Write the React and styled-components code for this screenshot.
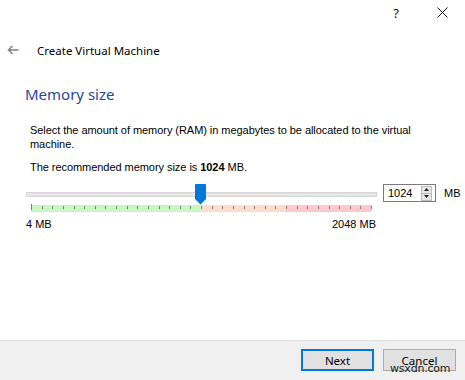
import React from "react";
import styled, { createGlobalStyle } from "styled-components";

const Global = createGlobalStyle`
  html, body { margin: 0; padding: 0; background: #fff; }
  body { font-family: "Liberation Sans", Arial, sans-serif; }
  * { box-sizing: border-box; }
`;

const Window = styled.div`
  width: 465px;
  height: 380px;
  display: flex;
  flex-direction: column;
  background: #fff;
  position: relative;
  overflow: hidden;
`;

const TitleBar = styled.div`
  height: 25px;
  display: flex;
  justify-content: flex-end;
`;

const TitleBtn = styled.div`
  width: 46px;
  height: 25px;
  display: flex;
  align-items: center;
  justify-content: center;
  font-family: "Noto Sans", sans-serif;
  font-size: 13px;
  color: #111;
`;

const Header = styled.div`
  height: 26px;
  margin-top: 12px;
  display: flex;
  align-items: center;
  padding-left: 7px;
  gap: 18px;
`;

const HeaderTitle = styled.div`
  font-family: "Noto Sans", sans-serif;
  font-size: 11.5px;
  color: #000;
`;

const Content = styled.div`
  padding: 20px 0 0 25px;
  display: flex;
  flex-direction: column;
`;

const Heading = styled.h1`
  margin: 0;
  font-family: "Noto Sans", sans-serif;
  font-weight: 400;
  font-size: 15px;
  line-height: 22px;
  color: #23479d;
`;

const Body = styled.div`
  padding: 18px 0 0 5px;
  width: 440px;
  display: flex;
  flex-direction: column;
`;

const Para = styled.p`
  margin: 0 0 ${(p) => p.$gap || 0}px 0;
  max-width: 400px;
  font-size: 11px;
  line-height: 14px;
  color: #000;
  letter-spacing: -0.05px;
`;

const SliderRow = styled.div`
  display: flex;
  align-items: flex-start;
  margin-left: -4px;
  margin-top: 10px;
`;

const SliderCol = styled.div`
  width: 351px;
  flex-shrink: 0;
  display: flex;
  flex-direction: column;
`;

const TrackArea = styled.div`
  position: relative;
  height: 20px;
  display: flex;
  align-items: center;
`;

const Track = styled.div`
  width: 100%;
  height: 5px;
  background: #e7e7e7;
  border: 1px solid #d6d6d6;
`;

const Thumb = styled.svg`
  position: absolute;
  top: 0;
  left: 169px;
`;

const Scale = styled.svg`
  display: block;
  margin-left: 5px;
`;

const Labels = styled.div`
  display: flex;
  justify-content: space-between;
  font-size: 11px;
  line-height: 14px;
  margin-top: 5px;
  margin-right: 1px;
`;

const SpinBox = styled.div`
  margin-left: 6px;
  width: 53px;
  height: 18px;
  flex-shrink: 0;
  border: 1px solid #7a7a7a;
  display: flex;
  align-items: center;
  justify-content: space-between;
  padding: 0 3px 0 4px;
  font-size: 11px;
  background: #fff;
`;

const SpinBtns = styled.div`
  width: 11px;
  height: 15px;
  display: flex;
  flex-direction: column;
  border: 1px solid #bcbcbc;
  background: #e8e8e8;
`;

const SpinHalf = styled.div`
  flex: 1;
  display: flex;
  align-items: center;
  justify-content: center;
  border-top: ${(p) => (p.$bottom ? "1px solid #bcbcbc" : "none")};
`;

const Unit = styled.div`
  margin-left: 8px;
  margin-top: 3px;
  font-size: 11px;
`;

const Footer = styled.div`
  margin-top: auto;
  height: 40px;
  background: #f0f0f0;
  border-top: 1px solid #dfdfdf;
  display: flex;
  justify-content: flex-end;
  align-items: center;
  gap: 9px;
  padding: 0 9px 1px 0;
  position: relative;
`;

const Button = styled.div`
  width: 73px;
  height: 22px;
  display: flex;
  align-items: center;
  justify-content: center;
  background: #e1e1e1;
  border: ${(p) => (p.$primary ? "2px solid #0078d7" : "1px solid #adadad")};
  font-family: "Noto Sans", sans-serif;
  font-size: 11.5px;
  color: #000;
`;

const Watermark = styled.div`
  position: absolute;
  left: 390px;
  top: 21px;
  font-family: "DejaVu Sans", sans-serif;
  font-size: 11px;
  line-height: 14px;
  color: #222;
  letter-spacing: -0.2px;
`;

function ScaleDrawing() {
  const w = 341;
  const ticks = [];
  for (let i = 0; i <= 32; i++) {
    const x = Math.round((i * 340) / 32) + 0.5;
    ticks.push(
      <line key={i} x1={x} x2={x} y1={i === 0 ? 0 : 2} y2={i === 0 ? 6 : 5} stroke="#7d7d7d" strokeWidth="1" />
    );
  }
  return (
    <Scale width={w} height={8} viewBox={`0 0 ${w} 8`}>
      <rect x="0" y="1" width="170" height="7" fill="#c9f7c2" />
      <rect x="170" y="1" width="85" height="7" fill="#fddccb" />
      <rect x="255" y="1" width="86" height="7" fill="#fdc9cd" />
      {ticks}
    </Scale>
  );
}

export default function App() {
  return (
    <>
      <Global />
      <Window>
        <TitleBar>
          <TitleBtn>?</TitleBtn>
          <TitleBtn>
            <svg width="11" height="11" viewBox="0 0 11 11">
              <path d="M0.5 0.5 L10.5 10.5 M10.5 0.5 L0.5 10.5" stroke="#111" strokeWidth="1" fill="none" />
            </svg>
          </TitleBtn>
        </TitleBar>
        <Header>
          <svg width="12" height="10" viewBox="0 0 12 10">
            <path d="M11.5 5 H1.5 M5.5 1 L1.5 5 L5.5 9" stroke="#808080" strokeWidth="1.5" fill="none" />
          </svg>
          <HeaderTitle>Create Virtual Machine</HeaderTitle>
        </Header>
        <Content>
          <Heading>Memory size</Heading>
          <Body>
            <Para $gap={9}>
              Select the amount of memory (RAM) in megabytes to be allocated to the virtual machine.
            </Para>
            <Para>
              The recommended memory size is <b>1024</b> MB.
            </Para>
            <SliderRow>
              <SliderCol>
                <TrackArea>
                  <Track />
                  <Thumb width="11" height="21" viewBox="0 0 11 21">
                    <path d="M1 0 H10 Q11 0 11 1 V15 L5.5 20.5 L0 15 V1 Q0 0 1 0 Z" fill="#0078d7" />
                  </Thumb>
                </TrackArea>
                <ScaleDrawing />
                <Labels>
                  <span>4 MB</span>
                  <span>2048 MB</span>
                </Labels>
              </SliderCol>
              <SpinBox>
                <span>1024</span>
                <SpinBtns>
                  <SpinHalf>
                    <svg width="5" height="3" viewBox="0 0 5 3"><path d="M0 3 L2.5 0 L5 3 Z" fill="#222" /></svg>
                  </SpinHalf>
                  <SpinHalf $bottom>
                    <svg width="5" height="3" viewBox="0 0 5 3"><path d="M0 0 L2.5 3 L5 0 Z" fill="#222" /></svg>
                  </SpinHalf>
                </SpinBtns>
              </SpinBox>
              <Unit>MB</Unit>
            </SliderRow>
          </Body>
        </Content>
        <Footer>
          <Button $primary>Next</Button>
          <Button>Cancel</Button>
          <Watermark>wsxdn.com</Watermark>
        </Footer>
      </Window>
    </>
  );
}
